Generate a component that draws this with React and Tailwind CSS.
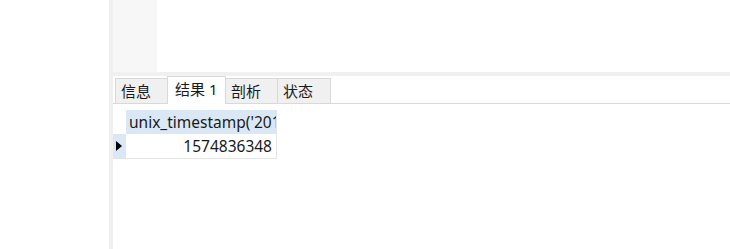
import React from "react";

const tabs = [
  { label: "信息", w: "w-[53px]" },
  { label: "结果 1", w: "w-[59px]", active: true },
  { label: "剖析", w: "w-[53px]" },
  { label: "状态", w: "w-[54px]" },
];

const font = { fontFamily: '"Noto Sans", "Noto Sans CJK SC", sans-serif' };

const App = () => {
  return (
    <div
      className="flex h-[249px] w-[730px] overflow-hidden bg-white text-[#1a1a1a]"
      style={font}
    >
      <div className="w-[109px] shrink-0 bg-white" />
      <div className="w-1 shrink-0 bg-[#f0f0f0]" />

      <div className="flex min-w-0 flex-1 flex-col">
        {/* editor area */}
        <div className="flex h-[72px] shrink-0">
          <div className="w-[44px] bg-[#f7f7f7]" />
          <div className="flex-1 bg-white" />
        </div>
        <div className="h-1 shrink-0 bg-[#f0f0f0]" />

        {/* tabs */}
        <div className="flex h-[28px] shrink-0 items-end border-b border-[#d9d9d9] pl-[2px]">
          {tabs.map((t, i) => (
            <div
              key={t.label}
              className={
                t.active
                  ? `relative -mb-px ${t.w} ${i ? "-ml-px" : ""} flex h-[28px] items-start border border-b-0 border-[#d9d9d9] bg-white pl-[7px] pt-[1px] text-[15px] leading-[22px]`
                  : `${t.w} ${i ? "-ml-px" : ""} flex h-[25px] items-start border border-b-0 border-[#d9d9d9] bg-[#f0f0f0] pl-[5px] pt-[1px] text-[15px] leading-[22px]`
              }
            >
              {t.label}
            </div>
          ))}
        </div>

        {/* result grid */}
        <div className="mt-[6px] flex flex-col">
          <div className="flex h-[24px]">
            <div className="w-[13px] shrink-0 bg-white" />
            <div className="w-[151px] overflow-hidden whitespace-nowrap border-r border-[#e3e3e3] bg-[#dae8f5] pl-[3px] text-[15.5px] leading-[24px]">
              unix_timestamp('2019-11-27 14:32:28')
            </div>
          </div>
          <div className="flex h-[25px] w-[164px] border-b border-[#e3e3e3]">
            <div className="flex w-[13px] shrink-0 items-center justify-center bg-[#dae8f5]">
              <svg width="6" height="10" viewBox="0 0 6 10" className="ml-[-1px]">
                <path d="M0 0 L6 5 L0 10 Z" fill="#000" />
              </svg>
            </div>
            <div className="w-[151px] border-r border-[#e3e3e3] pr-[4px] text-right text-[15.5px] leading-[24px]">
              1574836348
            </div>
          </div>
        </div>
      </div>
    </div>
  );
};

export default App;
